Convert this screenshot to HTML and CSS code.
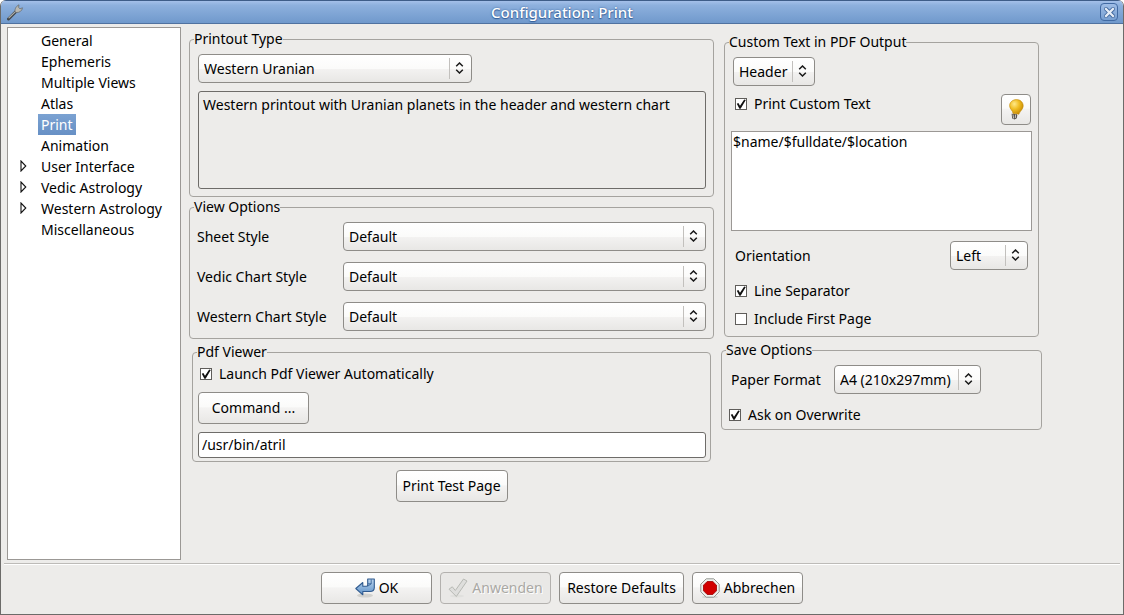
FILE: index.html
```html
<!DOCTYPE html>
<html lang="en">
<head>
<meta charset="utf-8">
<title>Configuration: Print</title>
<link rel="stylesheet" href="styles.css">
</head>
<body>
<svg class="symbols">
  <symbol id="updown" viewBox="0 0 9 12"><path d="M1.2 4.2 4.5 1 7.8 4.2M1.2 7.8 4.5 11 7.8 7.8" fill="none" stroke="#1a1a1a" stroke-width="1.5"/></symbol>
  <symbol id="expander" viewBox="0 0 7 12"><path d="M1 1v10L5.8 6z" fill="#fff" stroke="#111" stroke-width="1.1"/></symbol>
</svg>
<div class="window">
  <header class="titlebar">
    <svg class="wrench" viewBox="0 0 18 18" aria-hidden="true">
      <path d="M2.5 16 10 8.5" stroke="#414549" stroke-width="3" stroke-linecap="round"/>
      <path d="M3 14.8 10.5 7.6" stroke="#a9aaa6" stroke-width="1.2" stroke-linecap="round"/>
      <path d="M9 8.8C8.800 6 9.600 3.600 13 1.800L12.600 4.500 14 5.800 16.500 4.800C16 8 13.500 9.600 10.500 9.500Z" fill="#b9b8b1" stroke="#62676c" stroke-width=".7"/>
    </svg>
    <h1 class="title">Configuration: Print</h1>
    <button class="close" aria-label="Close"><svg viewBox="0 0 11 11"><path d="M2 2 9 9M9 2 2 9" stroke="#3e669d" stroke-width="4" stroke-linecap="square"/><path d="M2 2 9 9M9 2 2 9" stroke="#e6edf6" stroke-width="2.300" stroke-linecap="square"/></svg></button>
  </header>
  <div class="content">
    <nav class="tree" aria-label="Sections">
      <ul>
        <li><a href="#general">General</a></li>
        <li><a href="#ephemeris">Ephemeris</a></li>
        <li><a href="#views">Multiple Views</a></li>
        <li><a href="#atlas">Atlas</a></li>
        <li><a href="#print" class="selected" aria-current="page">Print</a></li>
        <li><a href="#animation">Animation</a></li>
        <li><svg class="expander"><use href="#expander"/></svg><a href="#interface">User Interface</a></li>
        <li><svg class="expander"><use href="#expander"/></svg><a href="#vedic">Vedic Astrology</a></li>
        <li><svg class="expander"><use href="#expander"/></svg><a href="#western">Western Astrology</a></li>
        <li><a href="#misc">Miscellaneous</a></li>
      </ul>
    </nav>
    <main class="column">
      <fieldset class="group">
        <legend>Printout Type</legend>
        <div class="stack">
          <div class="choice choice-printout"><select aria-label="Printout type"><option>Western Uranian</option></select><svg><use href="#updown"/></svg></div>
          <textarea class="description" readonly aria-label="Description">Western printout with Uranian planets in the header and western chart</textarea>
        </div>
      </fieldset>
      <fieldset class="group">
        <legend>View Options</legend>
        <div class="options">
          <label for="sheet">Sheet Style</label>
          <div class="choice"><select id="sheet"><option>Default</option></select><svg><use href="#updown"/></svg></div>
          <label for="vedic-style">Vedic Chart Style</label>
          <div class="choice"><select id="vedic-style"><option>Default</option></select><svg><use href="#updown"/></svg></div>
          <label for="western-style">Western Chart Style</label>
          <div class="choice"><select id="western-style"><option>Default</option></select><svg><use href="#updown"/></svg></div>
        </div>
      </fieldset>
      <fieldset class="group viewer">
        <legend>Pdf Viewer</legend>
        <div class="stack">
          <label class="check"><input type="checkbox" checked>Launch Pdf Viewer Automatically</label>
          <button class="button">Command ...</button>
          <input class="path" type="text" value="/usr/bin/atril" aria-label="Viewer command">
        </div>
      </fieldset>
      <button class="button test-page">Print Test Page</button>
    </main>
    <section class="column side">
      <fieldset class="group custom">
        <legend>Custom Text in PDF Output</legend>
        <div class="choice choice-header"><select aria-label="Text position"><option>Header</option></select><svg><use href="#updown"/></svg></div>
        <div class="custom-row">
          <label class="check"><input type="checkbox" checked>Print Custom Text</label>
          <button class="button hint" aria-label="Hint">
            <svg viewBox="0 0 16 21">
              <defs><radialGradient id="glow" cx=".35" cy=".3" r=".8"><stop offset="0" stop-color="#ffe98a"/><stop offset=".45" stop-color="#f0bd22"/><stop offset="1" stop-color="#bd8000"/></radialGradient></defs>
              <path d="M8.600.6c4 0 6.600 2.900 6.600 6.300 0 3.400-3.200 4.900-4.300 8.300L5 14.500C5 11.500 1.600 10.300 1.600 6.700 1.600 3.200 4.600.6 8.600.6Z" fill="url(#glow)" stroke="#c58b0c" stroke-width=".6"/>
              <path d="M3.600 14.800 9.400 15.300 8.800 19.300 6.500 20.600 4.200 19.500Z" fill="#56514b"/>
              <path d="M5 15.500 5.600 19.500M7.600 15.600 7.300 19" stroke="#d6d3cf" stroke-width=".9"/>
            </svg>
          </button>
        </div>
        <textarea class="custom-text" aria-label="Custom text">$name/$fulldate/$location</textarea>
        <div class="orientation">
          <label for="orientation">Orientation</label>
          <div class="choice choice-orientation"><select id="orientation"><option>Left</option></select><svg><use href="#updown"/></svg></div>
        </div>
        <div class="checks">
          <label class="check"><input type="checkbox" checked>Line Separator</label>
          <label class="check"><input type="checkbox">Include First Page</label>
        </div>
      </fieldset>
      <fieldset class="group save">
        <legend>Save Options</legend>
        <div class="paper">
          <label for="paper">Paper Format</label>
          <div class="choice choice-paper"><select id="paper"><option>A4 (210x297mm)</option></select><svg><use href="#updown"/></svg></div>
        </div>
        <label class="check"><input type="checkbox" checked>Ask on Overwrite</label>
      </fieldset>
    </section>
  </div>
  <footer class="actions">
    <button class="button action">
      <svg viewBox="0 0 20 20">
        <defs><linearGradient id="blue" x2="0" y2="1"><stop stop-color="#bcd5ee"/><stop offset="1" stop-color="#5f92c8"/></linearGradient></defs>
        <ellipse cx="10" cy="17.500" rx="8" ry="2" fill="#d2d2cf"/>
        <path d="M.8 10.500 7.800 4.500V8.200H11.500Q12.700 8.200 12.700 6.800V1H19.300V9.500C19.300 12 17.500 13.500 15 13.500H7.800V16.800Z" fill="url(#blue)" stroke="#2f5a8f" stroke-width="1.100" stroke-linejoin="round"/>
        <path d="M13 5.800h3.200V1.300M16.200 5.800l-3.500 2.400" fill="none" stroke="#2f5a8f" stroke-width=".8"/>
      </svg>OK</button>
    <button class="button action" disabled>
      <svg viewBox="0 0 20 20"><ellipse cx="9" cy="18" rx="7" ry="1.500" fill="#e0e0dd"/><path d="M1 11.200 4.300 8.800 7.300 12.500 15.500 1 19 3 8.300 18.500Z" fill="#dededc" stroke="#b7b9b4" stroke-linejoin="round"/></svg>Anwenden</button>
    <button class="button restore">Restore Defaults</button>
    <button class="button action">
      <svg viewBox="0 0 20 20"><ellipse cx="10" cy="19" rx="8" ry="1" fill="#cfcfcc"/><path d="M6.200.8h7.600l5.400 5.400v7.600l-5.400 5.400H6.200L.8 13.800V6.200Z" fill="#f0f1ee" stroke="#969994"/><path d="M7.200 3.500h5.600l3.700 3.700v5.600l-3.700 3.700H7.200l-3.700-3.700V7.200Z" fill="#d20000" stroke="#990000" stroke-width=".8"/></svg>Abbrechen</button>
  </footer>
</div>
</body>
</html>
```
FILE: styles.css
```css
* { box-sizing: border-box; }
body {
  margin: 0;
  background: #fff;
  color: #000;
  font: 14px/20px "Noto Sans", "Open Sans", sans-serif;
}
button, select, input, textarea { font: inherit; color: inherit; margin: 0; }
.symbols { display: none; }
.window {
  min-height: 100vh;
  display: flex;
  flex-direction: column;
  background: #edecea;
  border: 1px solid #6c6b69;
  border-top: 0;
  border-radius: 6px 6px 0 0;
  overflow: hidden;
}
.titlebar {
  height: 24px;
  display: flex;
  align-items: center;
  padding: 0 5px;
  border-top: 1px solid #3e5d88;
  border-bottom: 1px solid #5072a0;
  background: linear-gradient(#a4c0e9, #8db0dd 20%, #7099cc);
}
.wrench { width: 18px; height: 18px; fill: none; }
.title {
  flex: 1;
  margin: 0;
  text-align: center;
  font-size: 15px;
  font-weight: 500;
  line-height: 20px;
  color: #fff;
  text-shadow: 0 0 2px #355f99, 0 1px 1px #355f99;
}
.close {
  width: 18px;
  height: 18px;
  display: grid;
  place-items: center;
  padding: 0;
  border: 1px solid #416aa3;
  border-radius: 4px;
  background: linear-gradient(#9fbde6, #779fd1);
}
.close svg { width: 11px; height: 11px; }
.content {
  flex: 1;
  display: grid;
  grid-template-columns: 174px minmax(0, 525fr) minmax(0, 321fr);
  column-gap: 8px;
  padding: 3px 80px 3px 6px;
}
.tree { background: #fff; border: 1px solid #9b9895; }
.tree ul { list-style: none; margin: 0; padding: 2px 0 0 10px; }
.tree li { position: relative; height: 21px; padding-left: 20px; }
.tree a {
  display: inline-block;
  padding: 0 3px;
  line-height: 21px;
  color: inherit;
  text-decoration: none;
  white-space: nowrap;
}
.tree .selected { color: #fff; background: linear-gradient(#7ba2d2, #6790c5); }
.expander { position: absolute; left: 2px; top: 4px; width: 7px; height: 12px; }
.column { display: flex; flex-direction: column; padding-top: 2px; }
.side { margin: 0 1px 0 -1px; padding-top: 5px; }
.group {
  min-width: 0;
  margin: 0;
  padding: 5px 7px 7px 8px;
  border: 1px solid #a5a39f;
  border-radius: 4px;
}
.group legend { margin-left: -4px; padding: 0; }
.stack { display: flex; flex-direction: column; align-items: flex-start; gap: 8px; }
.choice { display: grid; align-items: center; min-width: 0; }
.choice select {
  grid-area: 1 / 1;
  width: 100%;
  height: 29px;
  padding: 0 23px 0 5px;
  appearance: none;
  border: 1px solid #8e8c88;
  border-radius: 4px;
  background: linear-gradient(#fff, #fbfbfa 50%, #f3f2f1 52%, #e8e7e5);
}
.choice svg {
  grid-area: 1 / 1;
  justify-self: end;
  width: 23px;
  height: 21px;
  padding: 4px 8px 5px 5px;
  border-left: 1px solid #c2c0bd;
  pointer-events: none;
}
.choice-printout { width: 274px; }
.choice-header { width: 82px; }
.choice-orientation { width: 78px; }
.choice-paper { width: 147px; }
.description, .custom-text { display: block; width: 100%; resize: none; outline: 0; }
.description {
  height: 98px;
  padding: 3px 4px;
  border: 1px solid #6e6c69;
  border-radius: 3px;
  background: #edecea;
}
.options {
  display: grid;
  grid-template-columns: 145px minmax(0, 1fr);
  align-items: center;
  row-gap: 11px;
}
.options label { margin-left: -1px; }
.viewer { margin: 3px 3px 0; padding: 2px 4px 3px 5px; }
.group.viewer legend { margin-left: -1px; }
.viewer .check { padding-left: 2px; }
.check { display: flex; align-items: center; gap: 7px; }
.check input {
  appearance: none;
  width: 12px;
  height: 12px;
  flex: none;
  background: #fff;
  border: 1px solid #5f5d5a;
}
.check input:checked::before {
  content: "";
  display: block;
  width: 10px;
  height: 10px;
  background: #111;
  clip-path: polygon(8% 48%, 24% 40%, 40% 68%, 82% 6%, 98% 10%, 46% 98%, 34% 98%);
}
.button {
  height: 32px;
  padding: 0 4px;
  border: 1px solid #8e8c88;
  border-radius: 4px;
  background: linear-gradient(#fff, #fbfbfa 45%, #f4f3f2 50%, #e8e7e5);
  white-space: nowrap;
}
.viewer .button { width: 111px; }
.path {
  width: 100%;
  height: 26px;
  padding: 0 3px 2px;
  border: 1px solid #6e6c69;
  border-radius: 3px;
  background: #fff;
}
.test-page { align-self: center; width: 112px; margin-top: 8px; }
.custom { margin: 0 3px; padding: 5px 6px 7px; }
.group.custom legend, .group.save legend { margin-left: -2px; }
.group.save legend { margin-left: -3px; }
.custom .choice-header { margin-left: 2px; }
.custom-row { display: flex; justify-content: space-between; align-items: flex-start; margin: 8px 1px 6px 0; padding-left: 4px; }
.hint { width: 30px; height: 31px; padding: 0; display: grid; place-items: center; }
.hint svg { width: 16px; height: 21px; }
.custom-text { height: 100px; padding: 0 1px; border: 1px solid #9b9895; background: #fff; }
.orientation { display: flex; justify-content: space-between; align-items: center; margin: 10px 4px 0; }
.checks { display: grid; gap: 8px; margin: 11px 4px 0; }
.save { margin-top: 3px; padding: 5px 7px 4px; }
.paper {
  display: grid;
  grid-template-columns: 103px auto;
  justify-content: start;
  align-items: center;
  margin: 0 0 11px 2px;
}
.actions {
  display: flex;
  justify-content: center;
  gap: 8px;
  margin: 0 3px;
  padding: 8px 0 10px;
  border-top: 1px solid #bdbbb8;
  box-shadow: inset 0 1px #fff;
}
.actions .button { display: flex; align-items: center; justify-content: center; gap: 4px; }
.action { width: 111px; }
.restore { width: 125px; }
.actions svg { width: 20px; height: 20px; }
.actions .button:disabled { color: #aaa8a4; background: #e9e8e6; border-color: #b3b1ae; text-shadow: 1px 1px #fff; }
```
